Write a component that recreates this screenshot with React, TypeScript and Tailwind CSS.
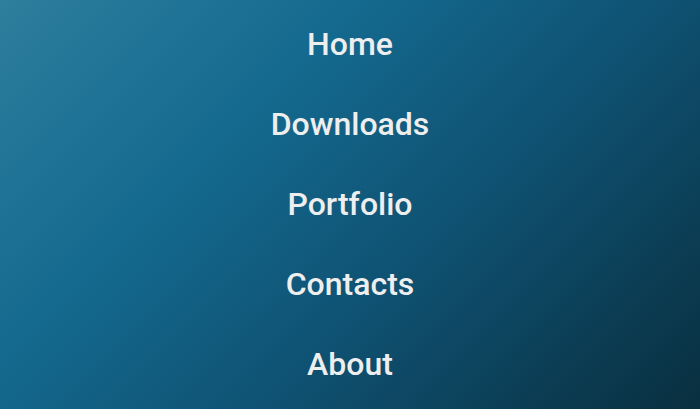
export default function App() {
  const items = ["Home", "Downloads", "Portfolio", "Contacts", "About"];
  return (
    <div
      className="w-[700px] h-[409px] pb-[2px] flex flex-col items-center justify-center bg-[linear-gradient(135deg,#2e7e9d_0%,#146a8f_32%,#0f5273_60%,#092f3f_100%)]"
      style={{ fontFamily: "Roboto, 'Liberation Sans', sans-serif" }}
    >
      {items.map((t) => (
        <a
          key={t}
          href="#"
          className="h-[80px] flex items-center justify-center text-[32px] font-medium text-[#eeeeee] no-underline"
        >
          {t}
        </a>
      ))}
    </div>
  );
}
